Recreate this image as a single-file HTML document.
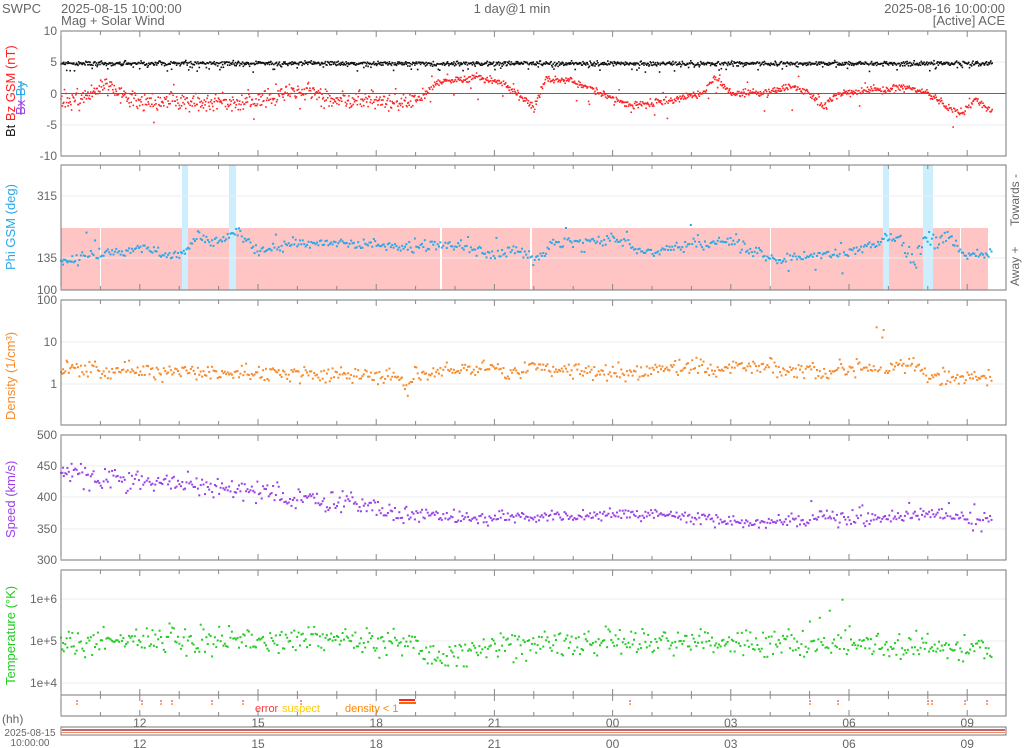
<!DOCTYPE html>
<html><head><meta charset="utf-8">
<style>
html,body{margin:0;padding:0;background:#fff;width:1024px;height:748px;overflow:hidden}
svg{display:block;font-family:"Liberation Sans",sans-serif}
</style></head>
<body>
<svg id="c" width="1024" height="748" xmlns="http://www.w3.org/2000/svg">
<g font-size="13" fill="#666">
<text x="2" y="13">SWPC</text>
<text x="61" y="13">2025-08-15 10:00:00</text>
<text x="61" y="25">Mag + Solar Wind</text>
<text x="512" y="13" text-anchor="middle">1 day@1 min</text>
<text x="1005" y="13" text-anchor="end">2025-08-16 10:00:00</text>
<text x="1005" y="25" text-anchor="end">[Active] ACE</text>
</g>
<g id="d"></g>
</svg>
<script>
var s=7;function r(){s=(s*16807)%2147483647;return s/2147483647}
function g(){return r()+r()+r()-1.5}
function L(k,t){for(var i=0;i<k.length-1;i++){if(t<=k[i+1][0]){var a=k[i],b=k[i+1];return a[1]+(b[1]-a[1])*(t-a[0])/(b[0]-a[0]);}}return k[k.length-1][1]}
var X=function(t){return 61+t*39.4};
var o=[];
function rect(x,y,w,h,f,st){o.push('<rect x="'+x+'" y="'+y+'" width="'+w+'" height="'+h+'" fill="'+(f||'none')+'"'+(st?' stroke="'+st+'"':'')+'/>')}
function line(x1,y1,x2,y2,c,w){o.push('<line x1="'+x1+'" y1="'+y1+'" x2="'+x2+'" y2="'+y2+'" stroke="'+c+'" stroke-width="'+(w||1)+'"/>')}
function txt(x,y,t,c,a,sz,extra){o.push('<text x="'+x+'" y="'+y+'" fill="'+(c||'#666')+'" font-size="'+(sz||12)+'" text-anchor="'+(a||'end')+'"'+(extra||'')+'>'+t+'</text>')}
function dot(x,y,c,sz){sz=sz||2;o.push('<rect x="'+(x-sz/2).toFixed(1)+'" y="'+(y-sz/2).toFixed(1)+'" width="'+sz+'" height="'+sz+'" fill="'+c+'"/>')}
var P=[[31,156],[165,290],[300,425],[435,560],[570,695]];
rect(61,228,927,62,'#ffc4c4');
[[100,101],[232,234],[440,442],[530,532],[770,771],[886,888],[928,930],[960,961]].forEach(function(a){rect(a[0],228,a[1]-a[0],62,'#fff')});
[[182,188],[229,236],[883,889],[923,933]].forEach(function(a){rect(a[0],165,a[1]-a[0],125,'#cdeefc')});
[62,125,196,258,342,384,466,497,529,599,641,683].forEach(function(y){line(61,y,1006,y,'#eee')});
line(61,93.5,1006,93.5,'#666');
var bz=[[0,-1],[0.5,-1],[1,1.5],[1.5,0],[2,-1.5],[3,-1],[4,-1.5],[5,-1],[6,0.5],[7,-1],[8,-1],[9,-1.5],[9.6,2],[10.5,2.5],[11.1,2],[11.6,0],[12,-2.5],[12.3,2.2],[13,2],[13.7,0],[14.5,-2],[15.5,-1],[16.3,0],[16.6,2.5],[17,0],[17.8,0],[18.5,1],[19,0],[19.3,-2],[19.8,0],[20.5,0.5],[21.5,1],[22,0],[22.5,-2],[22.8,-3.5],[23.2,-1],[23.6,-3]];
var ph=[[0,120],[1,150],[2,160],[3,140],[3.5,200],[4,180],[4.5,215],[5,150],[6,180],[8,175],[9,165],[10,175],[11,140],[11.5,160],[12,130],[12.5,180],[14,190],[15,150],[16,175],[17,185],[18,135],[19,140],[20,150],[21,195],[21.3,190],[21.6,110],[21.9,190],[22.2,180],[22.5,195],[23,140],[23.6,150]];
var dn=[[0,2],[3,2],[5,1.7],[7,1.7],[8.5,1.5],[8.8,0.7],[9,1.8],[11,2.5],[11.5,1.7],[12,2.4],[14,1.9],[14.5,1.6],[15,2.2],[17,2.6],[19,2.2],[19.4,1.4],[19.8,2.5],[21,2.3],[21.6,3.3],[22,1.4],[23.6,1.4]];
var sp=[[0,440],[1,430],[2,425],[3,425],[4,415],[5,412],[6,400],[7,395],[8,385],[8.5,375],[9.5,372],[10.5,365],[12,370],[13,372],[15,372],[16.5,365],[17,360],[19,362],[19.5,372],[20.5,365],[22,375],[23.6,362]];
var tp=[[0,0.8],[3,1.1],[5,1],[7,1.2],[8,0.9],[9,0.8],[9.2,0.45],[10.5,0.5],[11,0.8],[13,0.9],[15,1],[17,0.9],[19,0.8],[20,0.9],[21,0.8],[22,0.7],[23.6,0.6]];
for(var t=0;t<23.65;t+=0.018){
 var x=X(t);
 var bt=4.8+g()*0.35;if(r()<0.08)bt-=1.2*r();
 dot(x,93.5-bt*6.25,'#111',1.6);
 var ns=t<9?1.4:0.6;
 var v=L(bz,t)+g()*ns;if(r()<0.08)v+=g()*3;
 dot(x,93.5-v*6.25,'#f22',1.6);
 if(t%0.036<0.018){
 var pn=(t>21.3&&t<22.6)?30:15;
 var p=L(ph,t)+g()*pn;if(r()<0.05)p+=g()*60;
 dot(x,258-(p-135)*0.344,'#2aa8e8',2);
 var d=L(dn,t)*Math.exp(g()*0.45);if(t>20.6&&t<20.9&&r()<0.3)d*=6+r()*10;
 dot(x,384-42*Math.log10(d),'#f78a2a',2);
 var sv=L(sp,t)+g()*(t<9?18:10);if(t>19&&r()<0.15)sv+=g()*25;
 dot(x,560-(sv-300)*0.625,'#9a42e8',2);
 var tv=L(tp,t)*1e5*Math.exp(g()*0.7);if(t>19&&t<21&&r()<0.06)tv*=3+r()*5;
 dot(x,641-42*Math.log10(tv/1e5),'#2c2',2);
 }
}
var hrs=['12','15','18','21','00','03','06','09'];
P.concat([[695,716]]).forEach(function(p){
 rect(61,p[0],945,p[1]-p[0],null,'#777');
 for(var h=0;h<=24;h++){var x=X(h);if(x>1006)break;var big=(h+1)%3==0;var l=big?6:4;
  line(x,p[0],x,p[0]+l,'#888');line(x,p[1],x,p[1]-l,'#888');}
});
[[31,'10'],[62,'5'],[94,'0'],[125,'-5'],[156,'-10'],[196,'315'],[258,'135'],[290,'100'],[300,'100'],[342,'10'],[384,'1'],[435,'500'],[466,'450'],[497,'400'],[529,'350'],[560,'300'],[599,'1e+6'],[641,'1e+5'],[683,'1e+4']].forEach(function(a){txt(57,a[0]+4,a[1])});
function rt(x,y,parts,fs){var s='<text transform="translate('+x+','+y+') rotate(-90)" font-size="'+(fs||13)+'">';parts.forEach(function(p){s+='<tspan fill="'+p[1]+'"'+(p[2]||'')+'>'+p[0]+'</tspan>'});o.push(s+'</text>')}
rt(15,137,[['Bt ','#111'],['Bz GSM (nT)','#f22']]);
rt(25,115,[['Bx','#9a42e8',' text-decoration="line-through"'],[' By','#2aa8e8',' text-decoration="line-through"']]);
rt(15,270,[['Phi GSM (deg)','#2aa8e8']]);
rt(15,420,[['Density (1/cm³)','#f78a2a']]);
rt(15,538,[['Speed (km/s)','#9a42e8']]);
rt(15,685,[['Temperature (°K)','#2c2']]);
rt(1019,226,[['Towards -','#666']],12);
rt(1019,286,[['Away +','#666']],12);
[77,142,161,172,212,243,301,630,810,838,928,932,965,987].forEach(function(x){dot(x,701,'#f33',1.5);dot(x,704,'#f60',1.5)});
rect(399,699,16,2,'#f22');rect(399,702,17,2,'#f60');
txt(255,712,'error','#f33','start',11);txt(282,712,'suspect','#fc0','start',11);txt(345,712,'density &lt; 1','#f80','start',11);
txt(2,723,'(hh)','#666','start',12);
for(var i=0;i<8;i++){var x=X(2+3*i);txt(x,727,hrs[i],'#666','middle',12);txt(x,748,hrs[i],'#666','middle',12);}
rect(61,727,945,8,null,'#777');line(62,730,1005,730,'#a33',1.5);line(62,732.5,1005,732.5,'#e86',1);
txt(30,736,'2025-08-15','#666','middle',10);txt(30,746,'10:00:00','#666','middle',10);
document.getElementById('d').innerHTML=o.join('');
</script>
</body></html>
